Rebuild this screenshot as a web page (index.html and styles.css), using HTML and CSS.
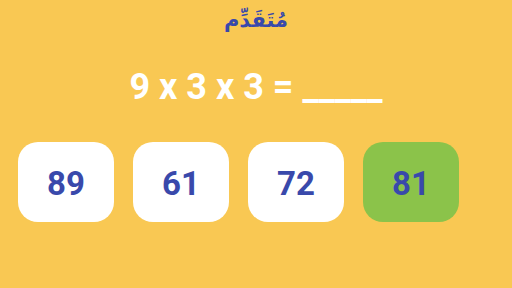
FILE: index.html
```html
<!DOCTYPE html>
<html lang="ar">
<head>
    <meta charset="UTF-8">
    <meta name="viewport" content="width=device-width, initial-scale=1.0">
    <title>Quiz</title>
    <link rel="stylesheet" href="styles.css">
</head>
<body>
    <div class="level">مُتَقَدِّم</div>
    <div class="question" dir="ltr">9 x 3 x 3 = _____</div>
    <div class="answers" dir="ltr">
        <div class="answer">89</div>
        <div class="answer">61</div>
        <div class="answer">72</div>
        <div class="answer correct">81</div>
    </div>
</body>
</html>
```

FILE: styles.css
```css
body {
    background-color: #f9c853;
    margin: 0;
    width: 512px;
    height: 288px;
    overflow: hidden;
    font-family: 'Roboto', sans-serif;
}

.level {
    color: #3949ab;
    font-family: 'DejaVu Sans', sans-serif;
    font-weight: bold;
    font-size: 21px;
    text-align: center;
    padding-top: 8px;
    height: 34px;
}

.question {
    color: #ffffff;
    font-weight: bold;
    font-size: 36px;
    text-align: center;
    margin-top: 20px;
    height: 50px;
    line-height: 50px;
}

.answers {
    display: flex;
    gap: 19px;
    padding-left: 18px;
    margin-top: 30px;
}

.answer {
    width: 96px;
    height: 80px;
    border-radius: 20px;
    background-color: #ffffff;
    color: #3949ab;
    font-weight: bold;
    font-size: 33px;
    display: flex;
    align-items: center;
    justify-content: center;
    padding-top: 2px;
    box-sizing: border-box;
}

.correct {
    background-color: #8bc34a;
}
```
